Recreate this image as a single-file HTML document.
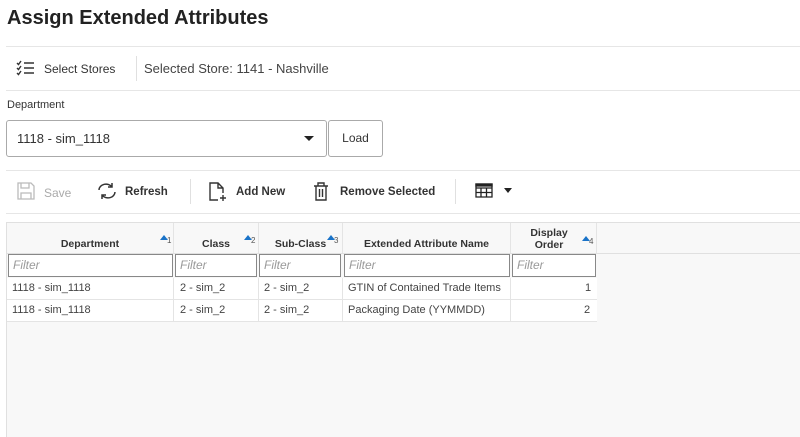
<!DOCTYPE html>
<html><head><style>
*{box-sizing:border-box;margin:0;padding:0}
body{width:800px;height:437px;overflow:hidden;background:#fff;font-family:"Liberation Sans",sans-serif;color:#333;position:relative}
.a{position:absolute}
.hr{position:absolute;left:6px;right:0;height:1px;background:#e6e6e6}
.t{font-size:12px;color:#333}
.grid{position:absolute;left:6px;top:222px;right:0;bottom:0;background:#f8f8f8;border-top:1px solid #e0e0e0;border-left:1px solid #e0e0e0}
.c{position:absolute;font-size:11px;color:#444}
.h{position:absolute;font-size:10.5px;font-weight:bold;color:#333;text-align:center;line-height:12px}
.f{position:absolute;height:23px;top:31px;border:1px solid #888;background:#fff;font-size:12px;font-style:italic;color:#999;padding:3px 4px}
.v{position:absolute;width:1px;background:#e4e4e4}
.r{position:absolute;left:0;width:590px;height:22px;background:#fff;border-bottom:1px solid #e4e4e4}
.s{position:absolute;width:12px;height:12px}
.s:before{content:"";position:absolute;left:0;top:2px;border-left:4px solid transparent;border-right:4px solid transparent;border-bottom:5px solid #1a73c8}
.s span{position:absolute;left:7px;top:3px;font-size:8px;color:#555}
</style></head><body>
<div class="a" style="left:7px;top:7px;font-size:20px;font-weight:bold;color:#222">Assign Extended Attributes</div>
<div class="hr" style="top:46px"></div>
<svg class="a" style="left:16px;top:60px" width="20" height="16" viewBox="0 0 20 16" fill="none" stroke="#333" stroke-width="1.4"><path d="M1 3l1.5 1.5L5 1M1 8l1.5 1.5L5 6M1 13l1.5 1.5L5 11M8 3h10M8 8h10M8 13h10"/></svg>
<div class="a t" style="left:44px;top:62px">Select Stores</div>
<div class="a" style="left:136px;top:56px;width:1px;height:25px;background:#e0e0e0"></div>
<div class="a" style="left:144px;top:61px;font-size:13px;color:#444">Selected Store: 1141 - Nashville</div>
<div class="hr" style="top:90px"></div>
<div class="a" style="left:7px;top:99px;font-size:11px;color:#333">Department</div>
<div class="a" style="left:6px;top:120px;width:321px;height:37px;border:1px solid #aaa;border-radius:3px"></div>
<div class="a" style="left:17px;top:131px;font-size:13px;color:#333">1118 - sim_1118</div>
<div class="a" style="left:304px;top:136px;width:0;height:0;border-left:5px solid transparent;border-right:5px solid transparent;border-top:5px solid #222"></div>
<div class="a" style="left:328px;top:120px;width:55px;height:37px;border:1px solid #aaa;border-radius:3px;font-size:12px;text-align:center;line-height:35px">Load</div>
<div class="hr" style="top:170px"></div>
<svg class="a" style="left:17px;top:182px" width="18" height="18" viewBox="0 0 18 18" fill="none" stroke="#bbb" stroke-width="1.3"><path d="M1 1h13l3 3v13H1z M4 1v5h8V1 M4 17v-6h10v6"/></svg>
<div class="a t" style="left:44px;top:186px;color:#aaa">Save</div>
<svg class="a" style="left:97px;top:182px" width="20" height="18" viewBox="0 0 20 18" fill="none" stroke="#333" stroke-width="1.5"><path d="M2 8a7 6 0 0 1 13-3M15 1v4h-4M18 10a7 6 0 0 1-13 3M5 17v-4h4"/></svg>
<div class="a t" style="left:125px;top:186px;font-weight:bold;font-size:11.5px">Refresh</div>
<div class="a" style="left:190px;top:179px;width:1px;height:25px;background:#e0e0e0"></div>
<svg class="a" style="left:209px;top:182px" width="18" height="20" viewBox="0 0 18 20" fill="none" stroke="#333" stroke-width="1.4"><path d="M9 18H1V1h8l5 5v5M9 1v5h5M14 13v6M11 16h6"/></svg>
<div class="a t" style="left:236px;top:186px;font-weight:bold;font-size:11.5px">Add New</div>
<svg class="a" style="left:313px;top:182px" width="16" height="19" viewBox="0 0 16 19" fill="none" stroke="#333" stroke-width="1.4"><path d="M1 4h14M5 4V1h6v3M3 4v14h10V4M6.5 7v8M9.5 7v8"/></svg>
<div class="a t" style="left:340px;top:186px;font-weight:bold;font-size:11.5px">Remove Selected</div>
<div class="a" style="left:455px;top:179px;width:1px;height:25px;background:#e0e0e0"></div>
<svg class="a" style="left:475px;top:183px" width="18" height="15" viewBox="0 0 18 15" fill="none" stroke="#222" stroke-width="1.3"><path d="M1 1h16v13H1zM1 5h16M1 9.5h16M6 5v9M11.5 5v9"/><path d="M1 1h16v2H1z" fill="#222"/></svg>
<div class="a" style="left:504px;top:188px;width:0;height:0;border-left:4.5px solid transparent;border-right:4.5px solid transparent;border-top:5px solid #222"></div>
<div class="hr" style="top:213px"></div>
<div class="grid">
<div class="h" style="left:0;width:166px;top:15px">Department</div><div class="s" style="left:153px;top:10px"><span>1</span></div>
<div class="h" style="left:167px;width:84px;top:15px">Class</div><div class="s" style="left:237px;top:10px"><span>2</span></div>
<div class="h" style="left:252px;width:83px;top:15px">Sub-Class</div><div class="s" style="left:320px;top:10px"><span>3</span></div>
<div class="h" style="left:336px;width:167px;top:15px">Extended Attribute Name</div>
<div class="h" style="left:504px;width:76px;top:4px">Display<br>Order</div><div class="s" style="left:575px;top:11px"><span>4</span></div>
<div class="v" style="left:166px;top:0;height:31px"></div><div class="v" style="left:251px;top:0;height:31px"></div><div class="v" style="left:335px;top:0;height:31px"></div><div class="v" style="left:503px;top:0;height:31px"></div><div class="v" style="left:589px;top:0;height:31px"></div>
<div style="position:absolute;left:0;right:0;top:30px;height:1px;background:#e0e0e0"></div>
<div class="f" style="left:1px;width:165px">Filter</div>
<div class="f" style="left:168px;width:82px">Filter</div>
<div class="f" style="left:252px;width:82px">Filter</div>
<div class="f" style="left:337px;width:166px">Filter</div>
<div class="f" style="left:505px;width:84px">Filter</div>
<div class="r" style="top:55px"></div><div class="r" style="top:77px"></div>
<div class="v" style="left:166px;top:55px;height:44px"></div><div class="v" style="left:251px;top:55px;height:44px"></div><div class="v" style="left:335px;top:55px;height:44px"></div><div class="v" style="left:503px;top:55px;height:44px"></div>
<div class="c" style="left:5px;top:59px">1118 - sim_1118</div><div class="c" style="left:173px;top:59px">2 - sim_2</div><div class="c" style="left:257px;top:59px">2 - sim_2</div><div class="c" style="left:341px;top:59px">GTIN of Contained Trade Items</div><div class="c" style="left:578px;top:59px">1</div>
<div class="c" style="left:5px;top:81px">1118 - sim_1118</div><div class="c" style="left:173px;top:81px">2 - sim_2</div><div class="c" style="left:257px;top:81px">2 - sim_2</div><div class="c" style="left:341px;top:81px">Packaging Date (YYMMDD)</div><div class="c" style="left:577px;top:81px">2</div>
</div>
</body></html>
